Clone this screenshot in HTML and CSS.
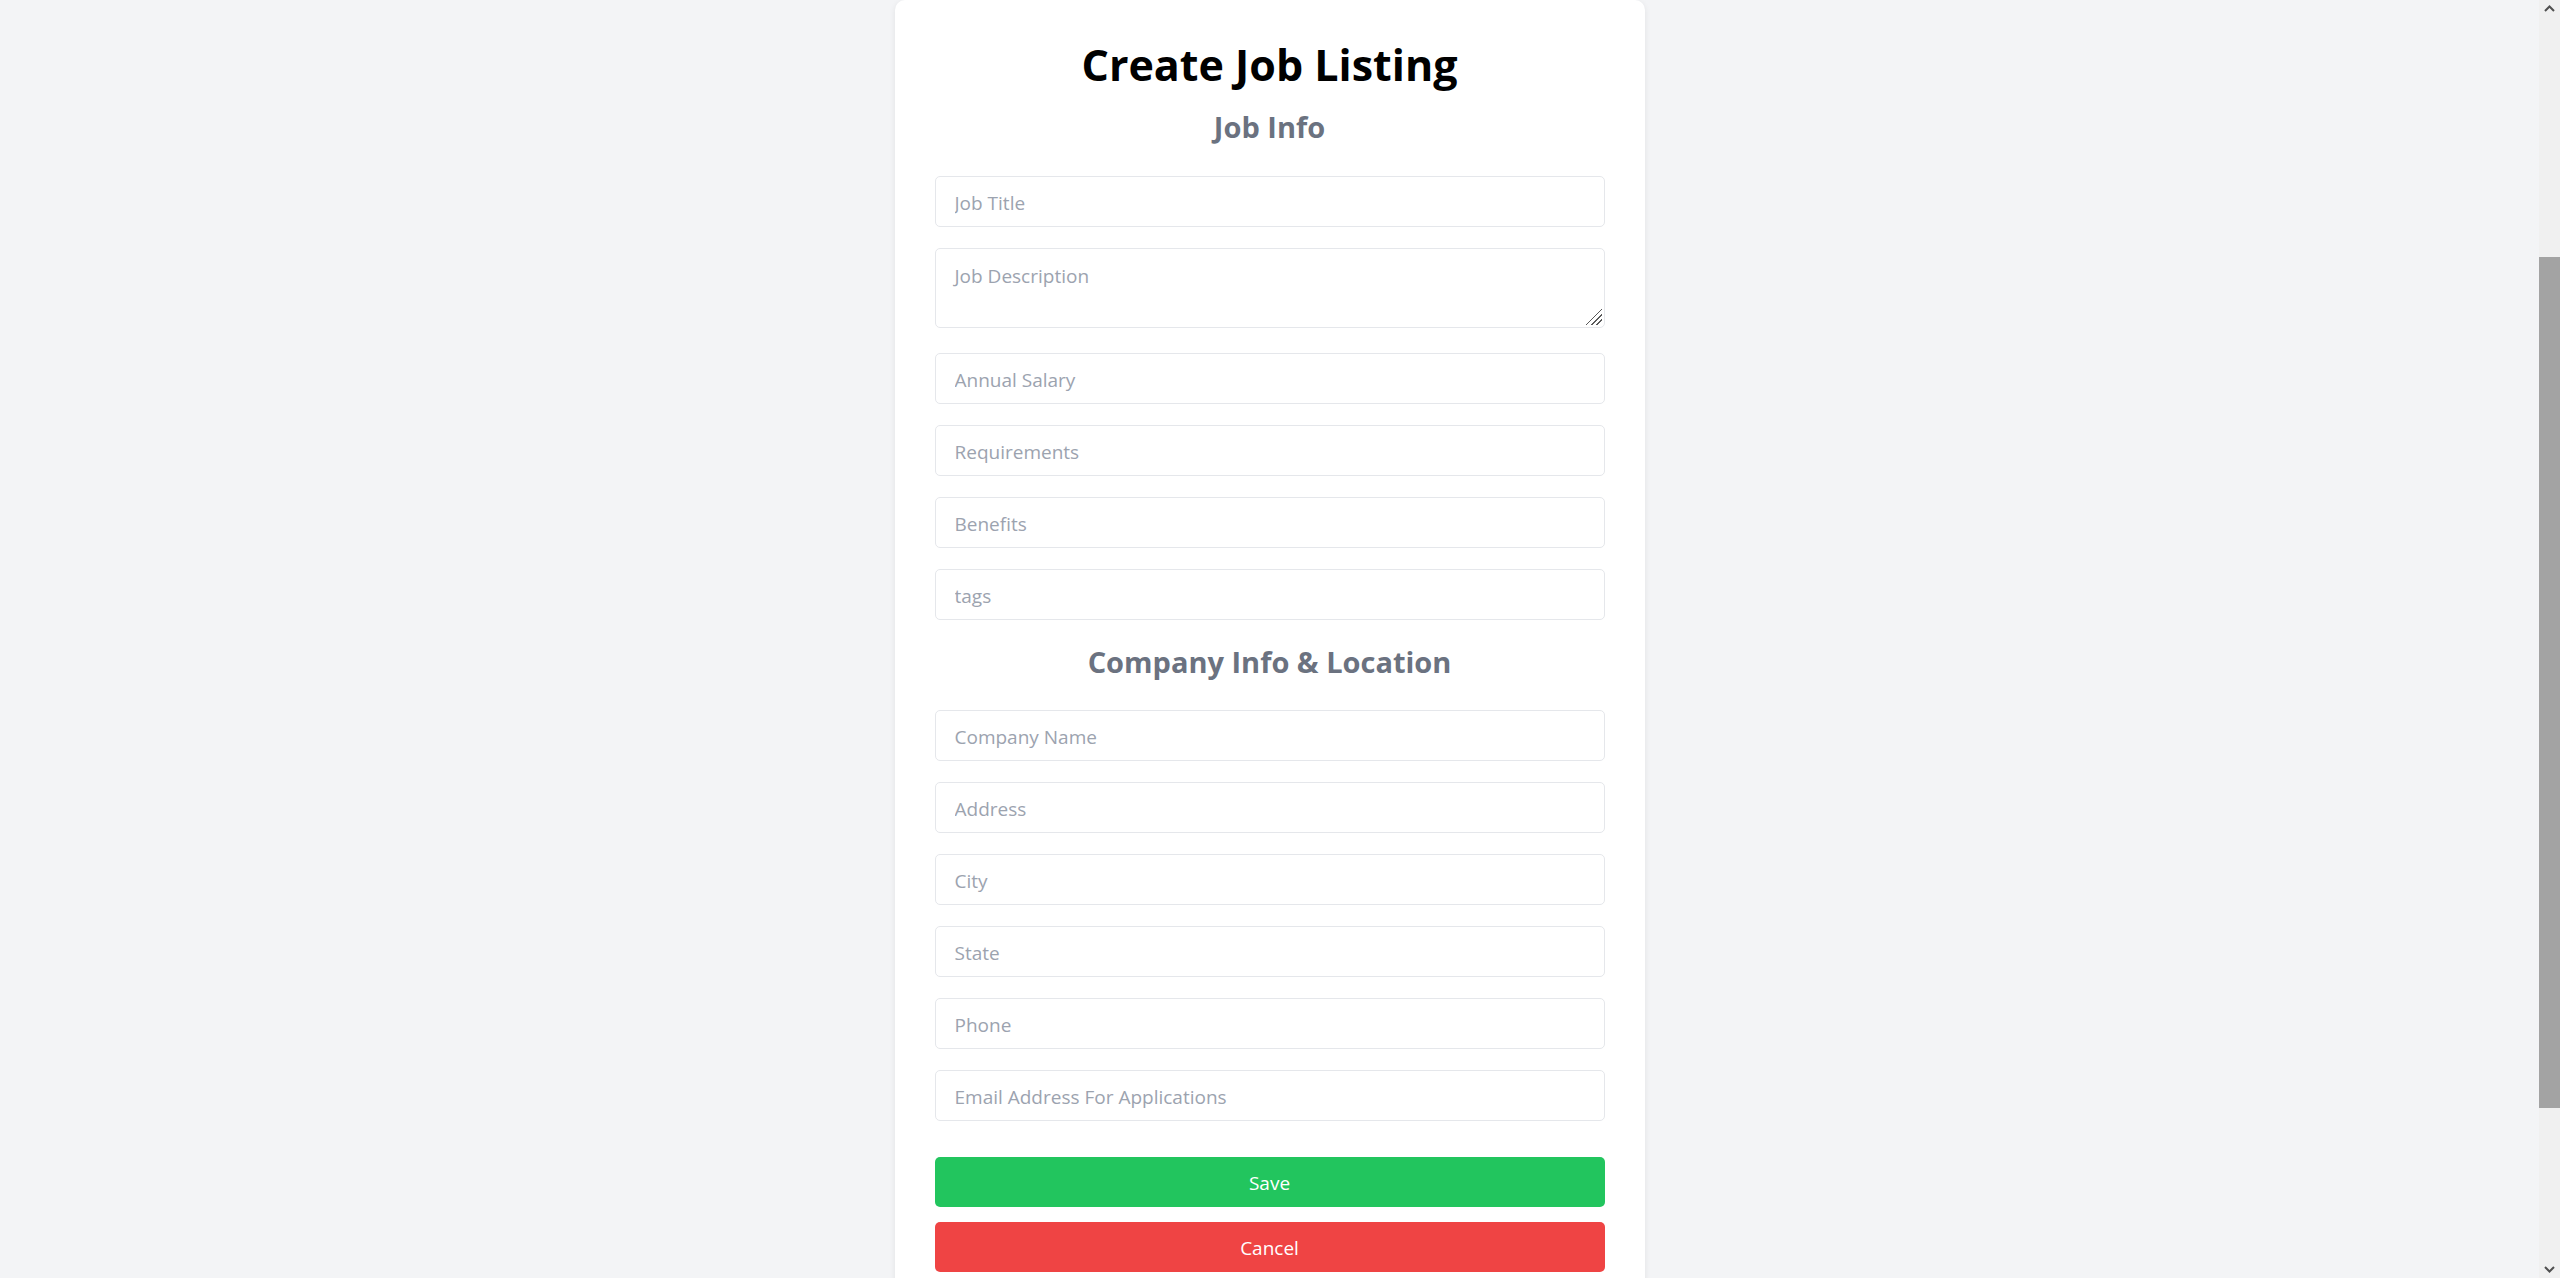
FILE: index.html
```html
<!DOCTYPE html>
<html lang="en">
<head>
  <meta charset="UTF-8" />
  <meta name="viewport" content="width=device-width, initial-scale=1.0"/>
  <title>Create Job Listing</title>
  <link rel="stylesheet" href="styles.css">
</head>
<body>
  <section class="page">
    <div class="card">
      <h1>Create Job Listing</h1>

      <form>
        <h2>Job Info</h2>

        <div class="field"><input type="text" placeholder="Job Title"></div>
        <div class="field field-area"><textarea placeholder="Job Description"></textarea></div>
        <div class="field"><input type="text" placeholder="Annual Salary"></div>
        <div class="field"><input type="text" placeholder="Requirements"></div>
        <div class="field"><input type="text" placeholder="Benefits"></div>
        <div class="field"><input type="text" placeholder="tags"></div>

        <h2 class="section-title">Company Info &amp; Location</h2>

        <div class="field"><input type="text" placeholder="Company Name"></div>
        <div class="field"><input type="text" placeholder="Address"></div>
        <div class="field"><input type="text" placeholder="City"></div>
        <div class="field"><input type="text" placeholder="State"></div>
        <div class="field"><input type="text" placeholder="Phone"></div>
        <div class="field"><input type="email" placeholder="Email Address For Applications"></div>

        <button type="submit" class="btn btn-save">Save</button>
        <button type="button" class="btn btn-cancel">Cancel</button>
      </form>
    </div>
  </section>

  <!-- window scrollbar -->
  <div class="scrollbar">
    <svg class="arrow arrow-up" width="21" height="17" viewBox="0 0 21 17"><polyline points="6,11 10.5,6.5 15,11" fill="none" stroke="#505050" stroke-width="2"/></svg>
    <div class="thumb"></div>
    <svg class="arrow arrow-down" width="21" height="17" viewBox="0 0 21 17"><polyline points="6,6 10.5,10.5 15,6" fill="none" stroke="#505050" stroke-width="2"/></svg>
  </div>
</body>
</html>
```

FILE: styles.css
```css
html, body {
  margin: 0;
  padding: 0;
}

body {
  font-family: "Open Sans", "Noto Sans", Arial, sans-serif;
  background-color: #f3f4f6;
  color: #111;
}

.page {
  display: flex;
  justify-content: center;
  padding-right: 21px;
  padding-bottom: 600px;
}

.card {
  width: 750px;
  box-sizing: border-box;
  background-color: #fff;
  border-radius: 10px;
  box-shadow: 0 2px 6px rgba(0, 0, 0, 0.08);
  padding: 38px 40px 40px;
}

h1 {
  margin: 0;
  font-size: 43px;
  line-height: 54px;
  font-weight: 700;
  color: #000;
  text-align: center;
}

h2 {
  margin: 17px 0 31px;
  font-size: 29px;
  line-height: 36px;
  font-weight: 700;
  color: #6b7280;
  text-align: center;
}

.section-title {
  margin-top: 24px;
  margin-bottom: 30px;
}

.field {
  margin-bottom: 21px;
}

.field-area {
  margin-bottom: 25px;
}

input,
textarea {
  display: block;
  width: 100%;
  box-sizing: border-box;
  border: 1px solid #e5e7eb;
  border-radius: 5px;
  font-family: inherit;
  font-size: 19px;
  color: #111;
  background-color: #fff;
  outline: none;
}

input {
  height: 51px;
  padding: 2px 19px 0;
}

textarea {
  height: 80px;
  padding: 12px 19px 6px;
  line-height: 30px;
  resize: none;
  /* resize grip */
  background-image: linear-gradient(135deg,
    transparent 0 47%, #5a5a5a 47% 53%,
    transparent 53% 64%, #5a5a5a 64% 70%,
    transparent 70% 81%, #5a5a5a 81% 87%,
    transparent 87%);
  background-size: 16px 16px;
  background-position: right 2px bottom 2px;
  background-repeat: no-repeat;
}

input::placeholder,
textarea::placeholder {
  color: #9ca3af;
}

.btn {
  display: block;
  width: 100%;
  height: 50px;
  padding: 2px 0 0;
  border: none;
  border-radius: 5px;
  font-family: inherit;
  font-size: 19px;
  color: #fff;
  cursor: pointer;
}

.btn-save {
  margin-top: 36px;
  background-color: #22c55e;
}

.btn-cancel {
  margin-top: 15px;
  background-color: #ef4444;
}

.scrollbar {
  position: fixed;
  top: 0;
  right: 0;
  width: 21px;
  height: 100%;
  background-color: #f0f0f0;
}

.arrow {
  position: absolute;
  left: 0;
}

.arrow-up {
  top: 0;
}

.arrow-down {
  bottom: 0;
}

.thumb {
  position: absolute;
  top: 257px;
  left: 0;
  width: 21px;
  height: 851px;
  background-color: #a3a3a3;
}
```
